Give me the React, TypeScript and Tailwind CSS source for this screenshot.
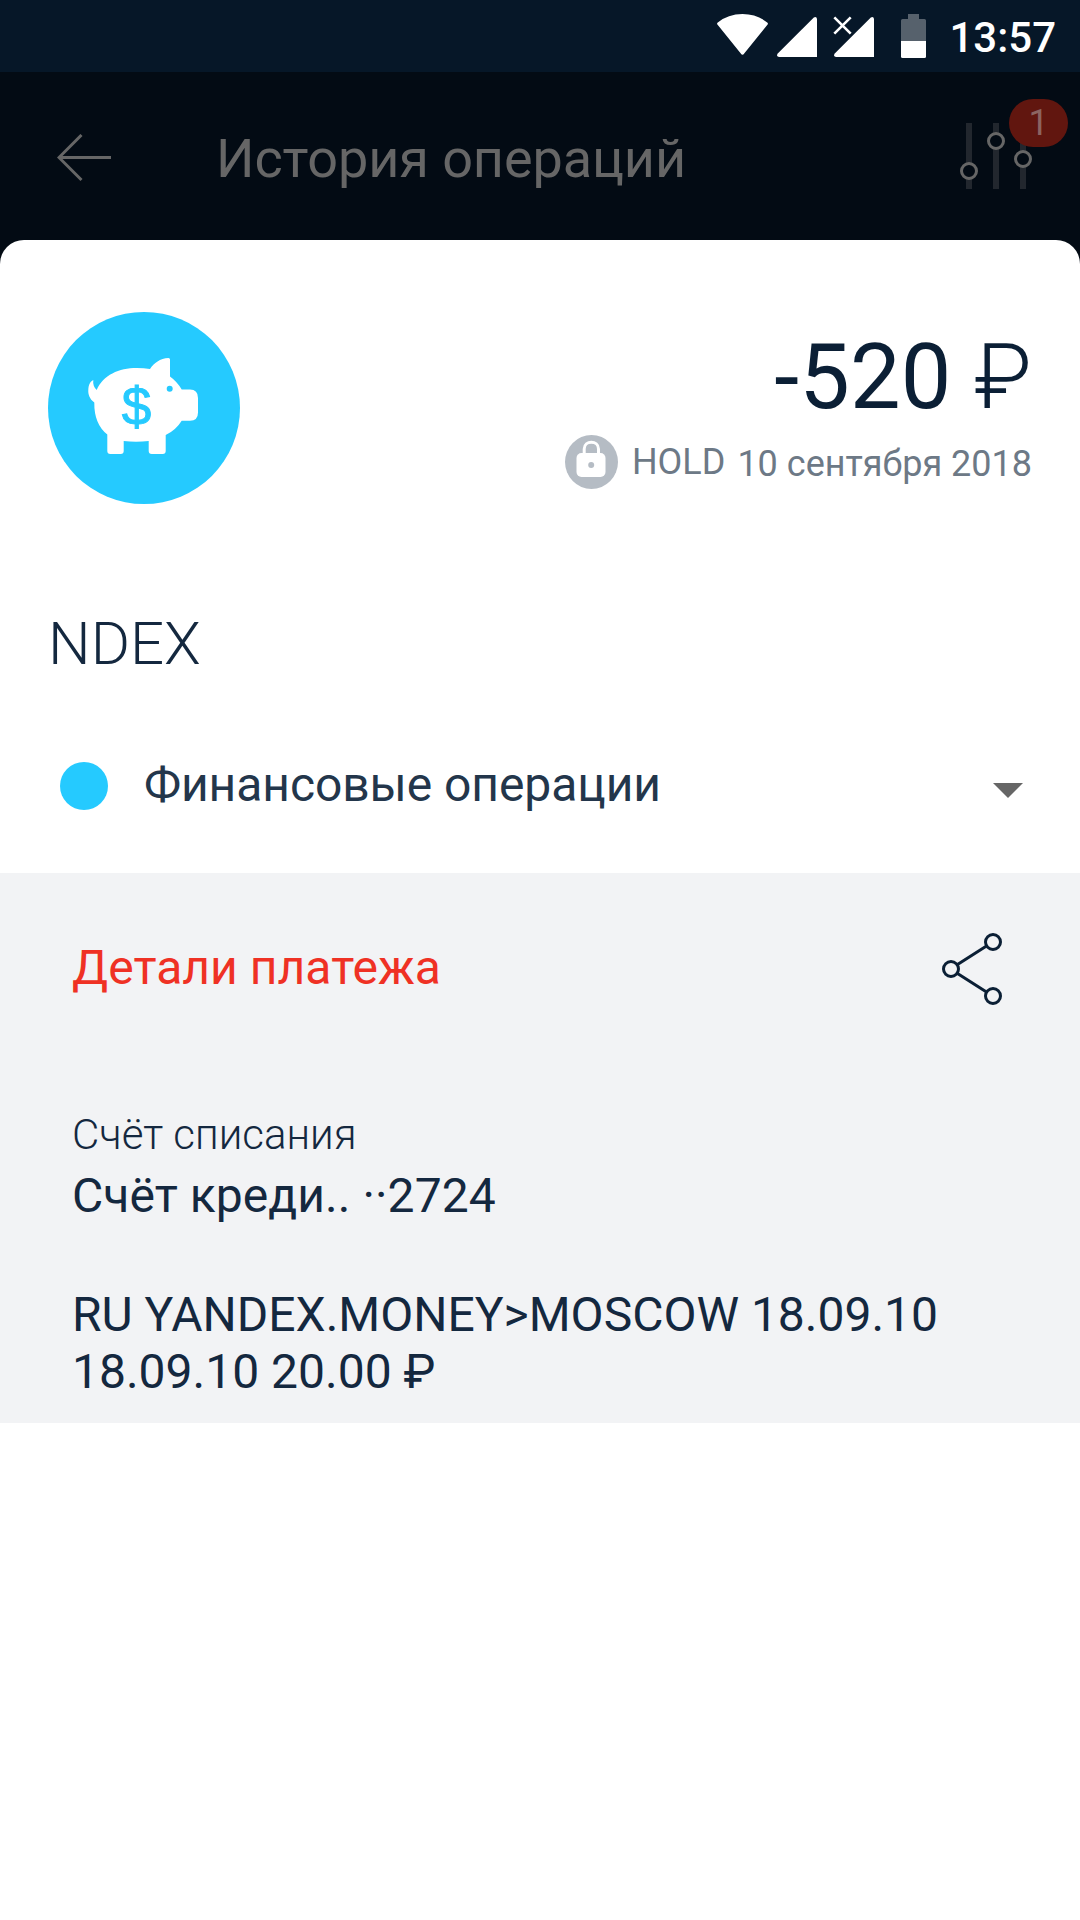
import type { ReactNode } from "react";

interface Payment {
  amount: string;
  status: string;
  date: string;
  merchant: string;
  category: string;
  accountLabel: string;
  account: string;
  description: string[];
}

const PAYMENT: Payment = {
  amount: "-520",
  status: "HOLD",
  date: "10 сентября 2018",
  merchant: "NDEX",
  category: "Финансовые операции",
  accountLabel: "Счёт списания",
  account: "Счёт креди.. ··2724",
  description: ["RU YANDEX.MONEY>MOSCOW 18.09.10", "18.09.10 20.00 ₽"],
};

function StatusBar() {
  return (
    <div className="flex h-[72px] items-start justify-end bg-[#061728] pr-[24px]">
      <svg width="234" height="72" viewBox="700 0 234 72" fill="#fff">
        <path d="M717.4 24.6Q716.6 23.4 717.8 22.5Q728 14 742.5 14Q757 14 767.2 22.5Q768.4 23.4 767.6 24.6L744.2 53.6Q742.5 56 740.8 53.6Z" />
        <path d="M779 57Q776 56.5 777.5 53.8L813.8 17.5Q816.5 16 817 19V57Z" />
        <path d="M836 57Q833 56.5 834.5 53.8L870.8 17.5Q873.5 16 874 19V57Z" />
        <path d="M834.3 17.3L850.7 33.7M850.7 17.3L834.3 33.7" stroke="#fff" strokeWidth="2.6" />
        <path d="M908 14H919V19H924.5Q926 19 926 20.5V41H901V20.5Q901 19 902.5 19H908Z" fill="#56616c" />
        <path d="M901 41H926V56.5Q926 58 924.5 58H902.5Q901 58 901 56.5Z" />
      </svg>
      <span className="ml-[15px] whitespace-nowrap text-[42px] font-medium leading-[75px] text-white">13:57</span>
    </div>
  );
}

function BackIcon() {
  return (
    <svg width="55" height="48" viewBox="0 0 55 48" fill="none" stroke="#666" strokeWidth="3">
      <path d="M24.5 1L2 23.5L24.5 46M3 23.5H54" />
    </svg>
  );
}

function FilterIcon() {
  return (
    <svg width="75" height="66" viewBox="0 0 75 66">
      <path d="M6 0H12V66H6ZM33 0H39V66H33ZM60 0H66V66H60Z" fill="#22272e" />
      <g fill="#030b14" stroke="#666" strokeWidth="3">
        <circle cx="9" cy="48" r="7.5" />
        <circle cx="36" cy="18" r="7.5" />
        <circle cx="63" cy="36" r="7.5" />
      </g>
    </svg>
  );
}

function Header() {
  return (
    <header className="flex h-[168px] items-start bg-[#030b14] text-[#666]">
      <div className="ml-[57px] mt-[62px]">
        <BackIcon />
      </div>
      <h1 className="ml-[104px] mt-[55px] whitespace-nowrap text-[54px] leading-[64px] tracking-[-0.1px]">История операций</h1>
      <div className="relative ml-auto mr-[45px] mt-[51px]">
        <FilterIcon />
        <span className="absolute -top-6 left-[49px] flex h-12 w-[59px] items-center justify-center rounded-full bg-[#61160f] text-[36px] leading-none text-[#8c6461]">
          1
        </span>
      </div>
    </header>
  );
}

function PiggyIcon() {
  return (
    <svg width="192" height="192" viewBox="0 0 192 192">
      <circle cx="96" cy="96" r="96" fill="#25caff" />
      <path
        d="M48.7 78C55 63 71 56 88.7 56Q96 56 102 57C106 51 112 46.5 120.5 46Q122 46 122 47.5V64.5Q129 69.5 133.7 77.5H142Q150 77.5 150 86V100.5Q150 108.7 142 108.7H133.7Q128 118 117.7 123V139Q117.7 142 114.7 142H103.7Q100.7 142 100.7 139V129Q88 130.5 75.7 129V139Q75.7 142 72.7 142H62.3Q59.3 142 59.3 139V122.5Q46 112 46.3 90.5C41.5 87 40 82 40.3 78C40.5 73 42 69.5 45.3 68Q44.5 74 48.7 78Z"
        fill="#fff"
      />
      <circle cx="121.7" cy="76.7" r="3" fill="#25caff" />
      <text x="88.5" y="112.5" textAnchor="middle" fontSize="53" fontFamily="Liberation Sans, sans-serif" fill="#25caff" stroke="#25caff" strokeWidth="1">
        $
      </text>
    </svg>
  );
}

function LockIcon() {
  return (
    <svg width="53" height="54" viewBox="0 0 53 54">
      <ellipse cx="26.5" cy="27" rx="26.5" ry="27" fill="#b5bcc4" />
      <path d="M19.2 19V14C19.2 5 33.5 5 33.5 14V19" fill="none" stroke="#fff" strokeWidth="3" />
      <rect x="11.5" y="18" width="29" height="24" rx="5" fill="#fff" />
      <circle cx="26.2" cy="30" r="3" fill="#b5bcc4" />
    </svg>
  );
}

function ShareIcon() {
  return (
    <svg width="60" height="72" viewBox="0 0 60 72" fill="none" stroke="#0b1f35" strokeWidth="3">
      <circle cx="51" cy="9" r="7.5" />
      <circle cx="9" cy="36" r="7.5" />
      <circle cx="51" cy="63" r="7.5" />
      <path d="M15.5 31.5L44.5 13M15.5 40.5L44.5 59" />
    </svg>
  );
}

function Line({ children }: { children: ReactNode }) {
  return <p className="whitespace-nowrap text-[48px] leading-[57px] text-[#14283f]">{children}</p>;
}

export default function App() {
  return (
    <div className="h-[1920px] w-[1080px] overflow-hidden bg-[#030b14] font-['Roboto',sans-serif]">
      <StatusBar />
      <Header />

      <main className="flex h-[1680px] flex-col rounded-t-[24px] bg-white">
        <section className="flex h-[633px] flex-col">
          <div className="flex justify-between px-12 pt-[72px]">
            <PiggyIcon />
            <div className="flex flex-col items-end">
              <p className="mt-[13px] whitespace-nowrap text-[90px] leading-[106px] tracking-[0.15px] text-[#0b1f35]">
                {PAYMENT.amount} <span className="font-light">₽</span>
              </p>
              <div className="mt-1 flex items-start text-[36px] leading-[42px] text-[#6d7986]">
                <LockIcon />
                <span className="ml-[14px] mt-[6px]">{PAYMENT.status}</span>
                <span className="ml-3 mt-[8px] whitespace-nowrap">{PAYMENT.date}</span>
              </div>
            </div>
          </div>

          <h2 className="ml-[48px] mt-[105px] text-[60px] font-light leading-[70px] text-[#14283f]">{PAYMENT.merchant}</h2>

          <div className="mt-[79px] flex items-center pl-[60px] pr-[57px]">
            <span className="h-12 w-12 rounded-full bg-[#25caff]" />
            <span className="-mt-[2px] ml-[36px] whitespace-nowrap text-[48px] leading-[57px] tracking-[-0.07px] text-[#23364b]">
              {PAYMENT.category}
            </span>
            <svg className="ml-auto mt-[9px]" width="30" height="15" viewBox="0 0 30 15">
              <path d="M0 0H30L15 15Z" fill="#666" />
            </svg>
          </div>
        </section>

        <section className="h-[550px] bg-[#f2f3f5] px-[72px] pt-[60px]">
          <div className="flex h-[72px] items-start justify-between">
            <h3 className="mt-[6px] whitespace-nowrap text-[48px] leading-[57px] tracking-[0.05px] text-[#ef3124]">
              Детали платежа
            </h3>
            <div className="mr-[6px]">
              <ShareIcon />
            </div>
          </div>
          <p className="mt-[105px] text-[42px] font-light leading-[49px] text-[#14283f]">{PAYMENT.accountLabel}</p>
          <div className="mt-[8px] tracking-[0.05px]">
            <Line>{PAYMENT.account}</Line>
          </div>
          <div className="mt-[62px]">
            {PAYMENT.description.map((line) => (
              <Line key={line}>{line}</Line>
            ))}
          </div>
        </section>
      </main>
    </div>
  );
}
